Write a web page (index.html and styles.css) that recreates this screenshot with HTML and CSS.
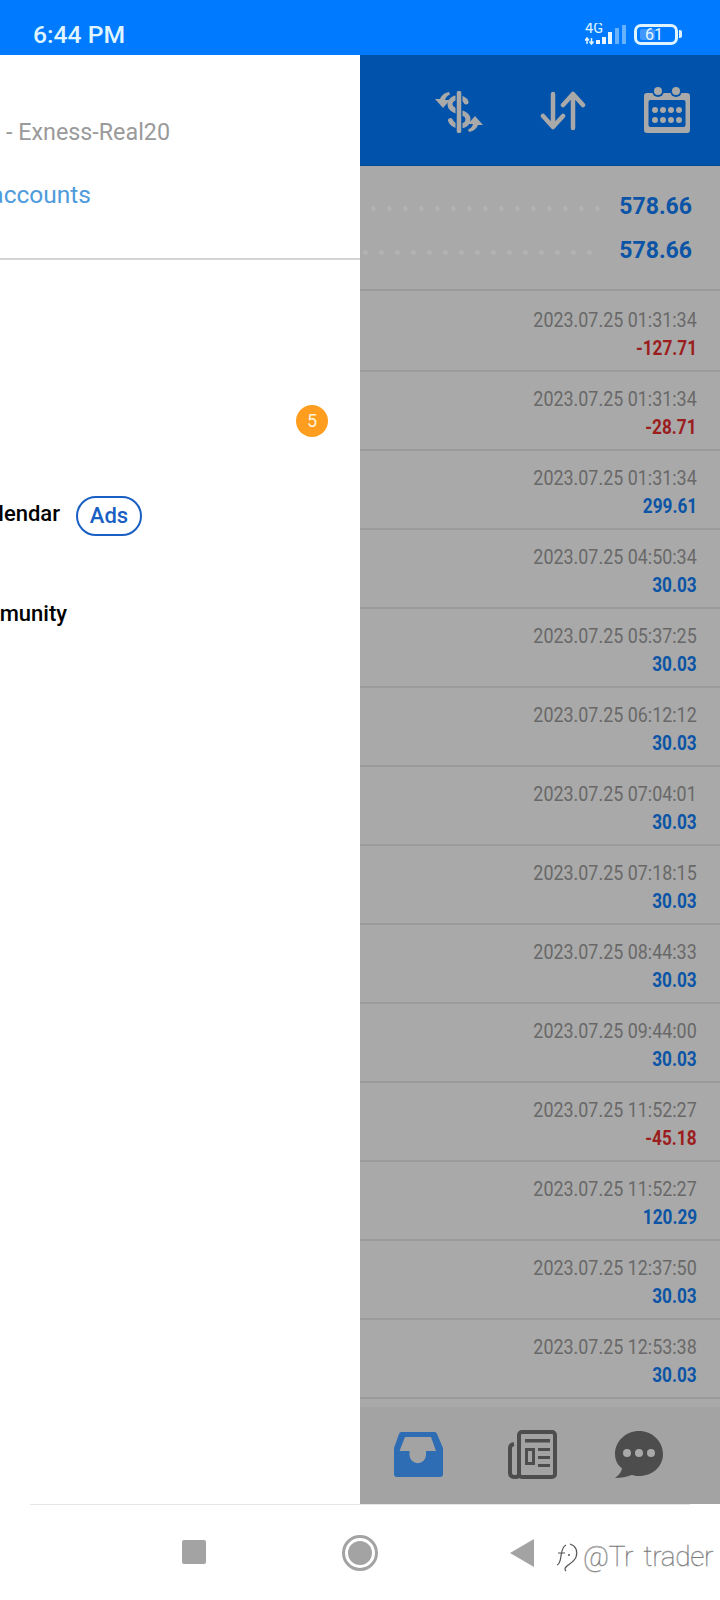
FILE: index.html
```html
<!DOCTYPE html>
<html lang="en">
<head>
<meta charset="utf-8">
<title>History</title>
<link rel="stylesheet" href="styles.css">
</head>
<body>
<div class="phone">
  <header class="status">
    <span class="clock">6:44 PM</span>
    <svg class="signal" width="42" height="24" viewBox="0 0 42 24">
      <text x="0" y="10" class="signal-text">4G</text>
      <path d="M2 15v6M0 17.500l2-2.500 2 2.500M6.500 15v6M4.500 18.500l2 2.500 2-2.500" class="signal-arrow"/>
      <rect x="11" y="17" width="4" height="4" class="bar"/>
      <rect x="17" y="14" width="4" height="7" class="bar"/>
      <rect x="23" y="9" width="4" height="12" class="bar"/>
      <rect x="30" y="5" width="4" height="16" class="bar dim"/>
      <rect x="37" y="2" width="4" height="19" class="bar dim"/>
    </svg>
    <div class="battery"><span class="battery-level"></span><span class="battery-text">61</span></div>
    <span class="battery-nub"></span>
  </header>

  <main class="stage">
    <aside class="drawer">
      <div class="account">
        <div class="off-left off-server"><span class="server">- Exness-Real20</span></div>
        <div class="off-left off-link"><span class="link">Manage accounts</span></div>
      </div>
      <nav class="menu">
        <div class="menu-row"><span class="badge">5</span></div>
        <div class="menu-row menu-row-calendar">
          <div class="off-left off-calendar"><span class="menu-label">Economic Calendar</span></div>
          <span class="ads">Ads</span>
        </div>
        <div class="menu-row menu-row-community">
          <div class="off-left off-community"><span class="menu-label">Traders Community</span></div>
        </div>
      </nav>
    </aside>

    <section class="pane">
      <div class="toolbar">
        <svg class="tool" width="48" height="42" viewBox="0 0 48 42">
          <path d="M31 11C29 5 16 5 15 12.500C14.500 18 20 19.500 24 21C30 22.500 34.500 25 32.500 31C30 36.500 18 36.500 15.500 29.500" class="tool-line tool-s"/>
          <path d="M24 2V40" class="tool-cut"/>
          <path d="M24 2V40" class="tool-line"/>
          <path d="M14 1C9 2 6 5 5 8L0 8L8 17L15 9L10 9C10.500 7 12 4.500 15 3.500Z" class="tool-fill"/>
          <path d="M34 41C39 40 42 37 43 34L48 34L40 25L33 33L38 33C37.500 35 36 37.500 33 38.500Z" class="tool-fill"/>
        </svg>
        <svg class="tool" width="48" height="42" viewBox="0 0 48 42">
          <path d="M14 3V36M4 25L14 36L24 25M34 37V3M24 14L34 3L44 14" class="tool-line"/>
        </svg>
        <svg class="tool tool-cal" width="48" height="46" viewBox="0 0 48 46">
          <rect x="1" y="6" width="46" height="40" rx="3" class="tool-fill"/>
          <rect x="5.500" y="13" width="37" height="27" rx="2" class="tool-hole"/>
          <circle cx="15" cy="4" r="6" class="tool-hole"/>
          <circle cx="33" cy="4" r="6" class="tool-hole"/>
          <circle cx="15" cy="4" r="4" class="tool-fill"/>
          <circle cx="33" cy="4" r="4" class="tool-fill"/>
          <g class="tool-fill">
            <circle cx="12" cy="23" r="3"/><circle cx="20" cy="23" r="3"/><circle cx="28" cy="23" r="3"/><circle cx="36" cy="23" r="3"/>
            <circle cx="12" cy="33" r="3"/><circle cx="20" cy="33" r="3"/><circle cx="28" cy="33" r="3"/><circle cx="36" cy="33" r="3"/>
          </g>
        </svg>
      </div>

      <div class="summary">
        <div class="sum-row"><span class="dots dots-a"></span><span class="sum-val">578.66</span></div>
        <div class="sum-row"><span class="dots dots-b"></span><span class="sum-val">578.66</span></div>
      </div>

      <div class="deals">
        <div class="deal"><span class="time">2023.07.25 01:31:34</span><span class="val neg">-127.71</span></div>
        <div class="deal"><span class="time">2023.07.25 01:31:34</span><span class="val neg">-28.71</span></div>
        <div class="deal"><span class="time">2023.07.25 01:31:34</span><span class="val">299.61</span></div>
        <div class="deal"><span class="time">2023.07.25 04:50:34</span><span class="val">30.03</span></div>
        <div class="deal"><span class="time">2023.07.25 05:37:25</span><span class="val">30.03</span></div>
        <div class="deal"><span class="time">2023.07.25 06:12:12</span><span class="val">30.03</span></div>
        <div class="deal"><span class="time">2023.07.25 07:04:01</span><span class="val">30.03</span></div>
        <div class="deal"><span class="time">2023.07.25 07:18:15</span><span class="val">30.03</span></div>
        <div class="deal"><span class="time">2023.07.25 08:44:33</span><span class="val">30.03</span></div>
        <div class="deal"><span class="time">2023.07.25 09:44:00</span><span class="val">30.03</span></div>
        <div class="deal"><span class="time">2023.07.25 11:52:27</span><span class="val neg">-45.18</span></div>
        <div class="deal"><span class="time">2023.07.25 11:52:27</span><span class="val">120.29</span></div>
        <div class="deal"><span class="time">2023.07.25 12:37:50</span><span class="val">30.03</span></div>
        <div class="deal"><span class="time">2023.07.25 12:53:38</span><span class="val">30.03</span></div>
      </div>

      <div class="tabs">
        <svg width="60" height="50" viewBox="0 0 60 50">
          <path fill-rule="evenodd" class="tab-active" d="M14 3H46C47.500 3 48.500 3.500 49 5L55 19V45C55 47 54 48 52 48H9C7 48 6 47 6 45V19L11 5C11.500 3.500 12.500 3 14 3ZM17 8L11.500 22H21.500V26A8.250 8.250 0 0 0 38 26V22H48L43 8Z"/>
        </svg>
        <svg width="60" height="50" viewBox="0 0 60 50">
          <g class="tab-glyph">
            <g class="tab-line">
              <rect x="19" y="3" width="36" height="45" rx="3"/>
              <path d="M19 45C19 47 17.500 48 15.500 48C12 48 10 47 10 44V19C10 16.500 11.500 15.500 14 15"/>
            </g>
            <path class="tab-ink" d="M25 10H50V13.500H25ZM25 19H35V36H25ZM38 19H50V22H38ZM38 27H50V30H38ZM38 35H50V38H38Z"/>
            <rect x="28" y="22" width="4" height="11" class="tab-hole"/>
          </g>
        </svg>
        <svg width="60" height="50" viewBox="0 0 60 50">
          <path class="tab-ink" d="M31 2C44 2 55 12 55 25C55 38 44 47 31 47C28 47 26 46.500 23.500 46C19 48 13 49 7 49C11 46 13.500 43 14 39.500C9.500 36 7 31 7 25C7 12 18 2 31 2Z"/>
          <circle cx="19" cy="24" r="4" class="tab-dot"/><circle cx="31" cy="24" r="4" class="tab-dot"/><circle cx="43" cy="24" r="4" class="tab-dot"/>
        </svg>
      </div>
    </section>
  </main>

  <footer class="navbar">
    <span class="nav-square"></span>
    <span class="nav-circle"><span class="nav-circle-core"></span></span>
    <span class="nav-back"></span>
    <span class="watermark">
      <svg width="26" height="30" viewBox="0 0 26 30">
        <path d="M11 3C7 5 7 9 6 14C5.500 18 5 22 2 23M3 11H10M15 2C21 4 23 9 21 15C19 20 14 22 12 24C10 26 9 27 11 29" class="wm-line"/>
        <circle cx="14" cy="13" r="1" class="wm-dot"/>
      </svg>
      <span class="wm-text">@Tr trader</span>
    </span>
  </footer>
</div>
</body>
</html>
```
FILE: styles.css
```css
* { box-sizing: border-box; }
html, body { margin: 0; padding: 0; }
body { background: #fff; font-family: Roboto, "Liberation Sans", sans-serif; }
.phone { width: 720px; height: 1600px; display: flex; flex-direction: column; overflow: hidden; position: relative; }

/* status bar */
.status { height: 55px; flex: none; background: #007bff; display: flex; align-items: flex-start; padding-left: 33px; color: #dff4ff; }
.clock { font-size: 24.700px; font-weight: 500; line-height: 28px; margin-top: 21px; }
.signal { margin-left: auto; margin-top: 23px; flex: none; }
.signal-text { font: 14.500px Roboto, sans-serif; fill: #dff4ff; }
.signal-arrow { fill: none; stroke: #dff4ff; stroke-width: 1.500; }
.bar { fill: #e8f6ff; }
.bar.dim { fill: #66b2ff; }
.battery { width: 44px; height: 21px; margin: 24px 0 0 7px; padding-right: 4px; border: 3px solid #dff4ff; border-radius: 7px; display: flex; align-items: center; justify-content: center; position: relative; flex: none; }
.battery-level { position: absolute; left: 3px; top: 2px; bottom: 2px; width: 15px; background: #3f97ff; border-radius: 2px; }
.battery-text { position: relative; font-size: 16px; line-height: 15px; color: #e6f6ff; }
.battery-nub { width: 3px; height: 8px; margin: 30px 38px 0 1px; background: #dff4ff; border-radius: 0 2px 2px 0; flex: none; }

/* main */
.stage { height: 1449px; flex: none; display: flex; }
.drawer { width: 360px; flex: none; background: #fff; overflow: hidden; display: flex; flex-direction: column; }
.account { height: 205px; flex: none; border-bottom: 2px solid #d4d4d4; padding-top: 61px; }
.off-left { display: flex; justify-content: flex-end; white-space: nowrap; }
.off-server { width: 170px; height: 32px; line-height: 32px; }
.off-link { width: 91px; margin-top: 31px; height: 32px; line-height: 32px; }
.server { font-size: 23.300px; color: #9a9a9a; }
.link { font-size: 24.500px; color: #4f9bdc; }
.menu { padding-top: 112px; display: flex; flex-direction: column; }
.menu-row { height: 97px; display: flex; align-items: center; }
.menu-row:first-child { justify-content: flex-end; padding-right: 32px; }
.menu-row-calendar { padding-bottom: 4px; }
.badge { width: 32px; height: 32px; border-radius: 50%; background: #ff9d1e; color: #fff3dc; font-size: 18px; display: flex; align-items: center; justify-content: center; }
.off-calendar { width: 60px; margin-top: -4px; }
.off-community { width: 67px; margin-top: -2px; }
.menu-label { font-size: 22px; font-weight: 500; color: #000; line-height: 28px; }
.ads { margin-left: 16px; width: 66px; height: 40px; border: 2px solid #1a5fc4; border-radius: 20px; color: #1a5fc4; font-size: 22px; font-weight: 500; display: flex; align-items: center; justify-content: center; }

/* right pane */
.pane { flex: 1; background: #a9a9a9; display: flex; flex-direction: column; min-width: 0; }
.toolbar { height: 111px; flex: none; background: #0052aa; border-bottom: 1px solid #034a95; display: flex; justify-content: flex-end; gap: 56px; padding: 36px 29px 0 0; align-items: flex-start; }
.tool { flex: none; }
.tool-cal { margin-top: -4px; }
.tool-line { fill: none; stroke: #a9a9a9; stroke-width: 4.500; stroke-linecap: round; stroke-linejoin: round; }
.tool-s { stroke-width: 5; }
.tool-cut { fill: none; stroke: #0052aa; stroke-width: 7; }
.tool-fill { fill: #a9a9a9; }
.tool-hole { fill: #0052aa; }

.summary { height: 125px; flex: none; border-bottom: 2px solid #9b9b9b; padding-top: 19px; }
.sum-row { display: flex; align-items: center; height: 44px; padding-right: 28px; }
.dots { flex: 1; height: 5px; margin: 2px 14px 0 0; background-image: radial-gradient(circle, #b2b2b2 2.300px, transparent 2.700px); background-size: 16px 5px; background-position: right center; background-repeat: repeat-x; }
.dots-b { margin-right: 22px; }
.sum-val { font-size: 23px; font-weight: 700; color: #0b54a6; line-height: 28px; }

.deals { display: flex; flex-direction: column; }
.deal { height: 79px; flex: none; border-bottom: 2px solid #9b9b9b; display: flex; flex-direction: column; align-items: flex-end; padding: 13px 23px 0 0; }
.deal:first-child { height: 81px; padding-top: 15px; }
.time { font-size: 21px; line-height: 28px; color: #686868; white-space: nowrap; transform: scaleX(0.852); transform-origin: right center; }
.val { font-size: 20px; font-weight: 700; line-height: 28px; color: #0b54a6; transform: scaleX(0.86); transform-origin: right center; }
.val.neg { color: #9b1d1d; }

.tabs { margin-top: 8px; flex: 1; background: #a3a3a3; display: flex; gap: 50px; padding: 22px 0 0 28px; align-items: flex-start; }
.tabs svg { flex: none; overflow: visible; }
.tab-glyph { transform: translateX(2px); }
.tab-active { fill: #2e6cb3; }
.tab-line { fill: none; stroke: #4d4d4d; stroke-width: 4; }
.tab-ink { fill: #4d4d4d; }
.tab-hole { fill: #a3a3a3; }
.tab-dot { fill: #a9a9a9; }

/* nav bar */
.navbar { flex: 1; position: relative; display: flex; align-items: flex-start; padding-top: 35px; background: #fff; }
.navbar::before { content: ""; position: absolute; left: 30px; right: 30px; top: 0; height: 1px; background: #e5e5e5; }
.nav-square { width: 24px; height: 24px; margin: 1px 0 0 182px; background: #a3a3a3; border-radius: 2px; flex: none; }
.nav-circle { width: 36px; height: 36px; margin: -4px 0 0 136px; border: 3px solid #a3a3a3; border-radius: 50%; display: flex; align-items: center; justify-content: center; flex: none; }
.nav-circle-core { width: 24px; height: 24px; border-radius: 50%; background: #a3a3a3; }
.nav-back { width: 0; height: 0; margin: 0 0 0 132px; border-top: 14px solid transparent; border-bottom: 14px solid transparent; border-right: 24px solid #a3a3a3; flex: none; }
.watermark { position: absolute; left: 555px; top: 36px; display: flex; align-items: center; gap: 2px; }
.wm-line { fill: none; stroke: #555; stroke-width: 1.200; }
.wm-dot { fill: #555; }
.wm-text { font-size: 28px; font-weight: 100; font-family: Roboto, sans-serif; color: #fff; -webkit-text-stroke: 0.5px #777; white-space: nowrap; word-spacing: 4px; letter-spacing: -0.3px; }
```
